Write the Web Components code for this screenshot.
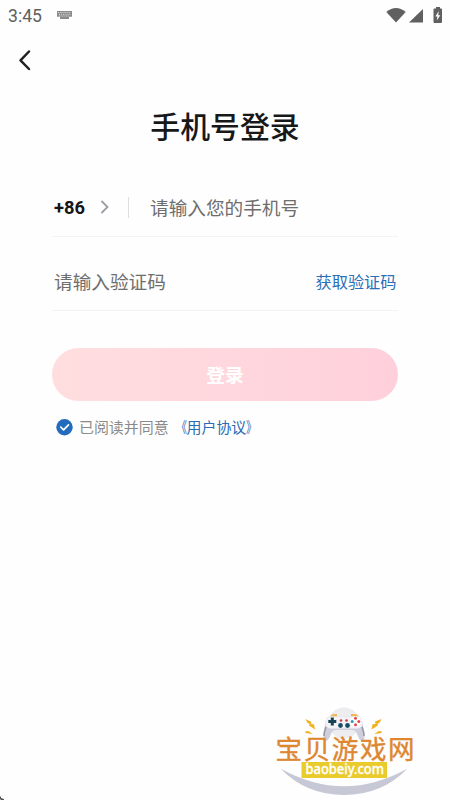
<!DOCTYPE html>
<html lang="zh-CN">
<head>
<meta charset="utf-8">
<title>手机号登录</title>
<style>
html,body{margin:0;height:100%;background:#fefefe;overflow:hidden}
body{font-family:Roboto,"Noto Sans CJK SC",sans-serif;color:#171819}
</style>
</head>
<body>
<login-screen></login-screen>
<script>
const define = (name, html) => customElements.define(name, class extends HTMLElement {
  constructor() {
    super();
    const t = document.createElement('template');
    t.innerHTML = html;
    this.attachShadow({mode: 'open'}).append(t.content.cloneNode(true));
  }
});

define('status-bar', `
<style>
:host{display:flex;align-items:center;height:32px;padding:0 8px;box-sizing:border-box;color:#606060}
.time{font-size:17.6px;line-height:32px;width:49px;white-space:nowrap}
svg{display:block;flex:none}
.space{flex:1}
.system{margin-right:-.5px}
</style>
<span class="time">3:45</span>
<svg width="15" height="8" viewBox="0 0 15 8" style="margin-top:-2px"><path d="M0 0H15V5.8H12V8H3V5.8H0Z" fill="#8b8b8b"/><path d="M1.2 1.5H14M2 3.3H13.5M2.4 5H12.6" stroke="#eee" stroke-width=".9" stroke-dasharray="1 1.1"/></svg>
<span class="space"></span>
<svg class="system" width="57" height="18" viewBox="0 0 57 18" fill="#606060"><path d="M0.3 5Q10 -3 19.7 5L10 15.500Z"/><path d="M37 2V15.500H23Z"/><path d="M50 0H54V1.600H55.300Q56 1.600 56 2.500V15Q56 16 55 16H48.600Q47.500 16 47.500 15V2.500Q47.500 1.600 48.400 1.600H50Z"/><path d="M52.800 4L49.400 9.500H51.400L50.800 13.500L54.300 8.300H52.200Z" fill="#fff"/></svg>`);

define('nav-bar', `
<style>:host{display:flex;align-items:center;height:56px;margin-bottom:2px;padding-left:17px}svg{display:block}</style>
<svg width="15" height="22" viewBox="0 0 15 22"><path d="M12 2.500L3.500 11.300L12 20" fill="none" stroke="#202123" stroke-width="2.500" stroke-linecap="round" stroke-linejoin="round"/></svg>`);

define('form-row', `
<style>:host{display:flex;align-items:center;height:59px;border-bottom:1px solid #f3f3f3;box-sizing:border-box;padding:0 1.5px 0 2px;white-space:nowrap}</style>
<slot></slot>`);

define('country-code', `
<style>
:host{display:flex;align-items:center;width:96px;font:700 18.3px Roboto,sans-serif;color:#151617}
span{width:46px}
svg{display:block}
i{width:1px;height:21px;background:#dedede;margin-left:19px}
</style>
<span><slot></slot></span><svg width="9" height="14" viewBox="0 0 9 14" style="margin-top:-1px"><path d="M2 1.5L7.500 7L2 12.5" fill="none" stroke="#9a9da3" stroke-width="1.800" stroke-linecap="round"/></svg><i></i>`);

define('field-hint', `
<style>:host{display:block;flex:1;font:400 18.65px "Noto Sans CJK SC",sans-serif;color:#6e6e6e;padding-bottom:2px}</style><slot></slot>`);

define('code-link', `
<style>:host{display:block;font:400 16.2px "Noto Sans CJK SC",sans-serif;color:#2b6fb8}</style><slot></slot>`);

define('primary-button', `
<style>:host{display:flex;align-items:center;justify-content:center;height:53px;padding-bottom:2px;box-sizing:border-box;border-radius:27px;background:linear-gradient(90deg,#ffdedf,#ffd7de 50%,#ffd0db);color:#fff;font:700 18.7px "Noto Sans CJK SC",sans-serif}</style><slot></slot>`);

define('agreement-line', `
<style>
:host{display:flex;align-items:center;height:22px;padding-left:4px;font:400 14.95px/22px "Noto Sans CJK SC",sans-serif;color:#8a8a8a;white-space:nowrap}
svg{display:block;margin-right:6px}
a{color:#2b6bb4;margin-left:3px}
b{display:inline-block;font-weight:400;transform:scaleX(.72);transform-origin:right}
b.end{transform-origin:left}
</style>
<svg width="17" height="17" viewBox="0 0 17 17"><circle cx="8.5" cy="8.2" r="8.2" fill="#226bbd"/><path d="M4.8 8.2L7.6 10.9L12.5 5.9" fill="none" stroke="#fff" stroke-width="1.7" stroke-linecap="round" stroke-linejoin="round"/></svg>
<span>已阅读并同意</span><a><b>《</b>用户协议<b class="end">》</b></a>`);

define('site-badge', `
<style>:host{display:block}svg{display:block}</style>
<svg width="180" height="100" viewBox="0 0 180 100">
<circle cx="74" cy="23" r="15.500" fill="#ededef"/>
<path d="M10.500 68.500Q74 104 137.500 68.500Q112 95 74 95Q36 95 10.500 68.500Z" fill="#c6c8d6"/>
<path d="M60 17Q61 14 64 14H67V17.500H60ZM81 17.500V14H85Q88 14 88.500 17Z" fill="#edb955"/>
<path d="M59 16.500H89Q92 17.500 92.500 23L94.500 34Q95 41 92 41Q89 40 87 34Q85.500 30 82 30H66Q62.500 30 61 34Q59 40 56 41Q53 41 53.500 34L55.500 22Q56 17 59 16.500Z" fill="#d0d0dc"/>
<path d="M60 16.500H88Q92 17 92.500 22Q93 28 87 28.500H61Q55 28 55.500 22Q56 17 60 16.500Z" fill="#f3f2f7"/>
<path d="M54 36Q54 32 56 27M94 36Q94 32 92 27" stroke="#9495a7" stroke-width="1.500" fill="none"/>
<path d="M62.300 17.500V25.500M58.300 21.500H66.300" stroke="#154454" stroke-width="3"/>
<g fill="#175064"><circle cx="70.500" cy="25.500" r="2.400"/><circle cx="77.500" cy="25.500" r="2.400"/><circle cx="71" cy="20.500" r="1.300" fill="#c53b43"/><circle cx="76.500" cy="20.500" r="1.300" fill="#c53b43"/></g>
<circle cx="85.500" cy="21.500" r="5.300" fill="#fff"/>
<g fill="#e2454e"><circle cx="85.500" cy="18.200" r="1.500"/><circle cx="85.500" cy="24.800" r="1.500"/><circle cx="82.200" cy="21.500" r="1.500" fill="#3597b5"/><circle cx="88.800" cy="21.500" r="1.500"/></g>
<g fill="#efb323"><path d="M35.500 19L41.500 22L41 24L44 24.300L45 29.500L39 25.500L39.500 23.700L37.500 23Z"/><path d="M35 31.500L38.500 31L40 32.300L43 34L38.500 33.500L35.500 33Z"/><path d="M111.500 19L105 21.500L105.500 24L102.500 24.300L101.500 29.500L108 25.500L107.500 23.500L109.500 23Z"/><path d="M112 31.500L108.500 31L107 32.300L104 34L108.500 33.500L111.500 33Z"/></g>
<text x="5.500" y="58.700" textLength="139" lengthAdjust="spacing" font-family="Noto Sans CJK SC" font-size="26.500" font-weight="400" fill="#dd8730" stroke="#dd8730" stroke-width=".4">宝贝游戏网</text>
<rect x="31.500" y="62" width="85.500" height="16" fill="#e9cb2c"/>
<text x="35.500" y="73.800" textLength="78.500" lengthAdjust="spacingAndGlyphs" font-family="Noto Sans" font-weight="500" font-size="14" fill="#fff" stroke="#fff" stroke-width=".3">baobeiy.com</text>
</svg>`);

define('login-screen', `
<style>
:host{display:flex;flex-direction:column;height:100vh;width:450px}
main{padding:0 52px}
h1{margin:13px 0 0;text-align:center;font:500 29.9px/44px "Noto Sans CJK SC",sans-serif;color:#171819}
.first{margin-top:31px}
.second{margin-top:15px}
primary-button{margin-top:37px}
agreement-line{margin-top:15px}
footer{margin-top:auto;height:100px;display:flex;justify-content:space-between;align-items:flex-end}
.corner{display:block}
</style>
<status-bar></status-bar>
<nav-bar></nav-bar>
<main>
<h1>手机号登录</h1>
<form-row class="first"><country-code>+86</country-code><field-hint>请输入您的手机号</field-hint></form-row>
<form-row class="second"><field-hint>请输入验证码</field-hint><code-link>获取验证码</code-link></form-row>
<primary-button>登录</primary-button>
<agreement-line></agreement-line>
</main>
<footer><svg class="corner" width="4" height="4"><path d="M0 0L1 1L1 2L4 3V4H1L0 3Z" fill="#55504f"/></svg><site-badge></site-badge></footer>`);
</script>
</body>
</html>
